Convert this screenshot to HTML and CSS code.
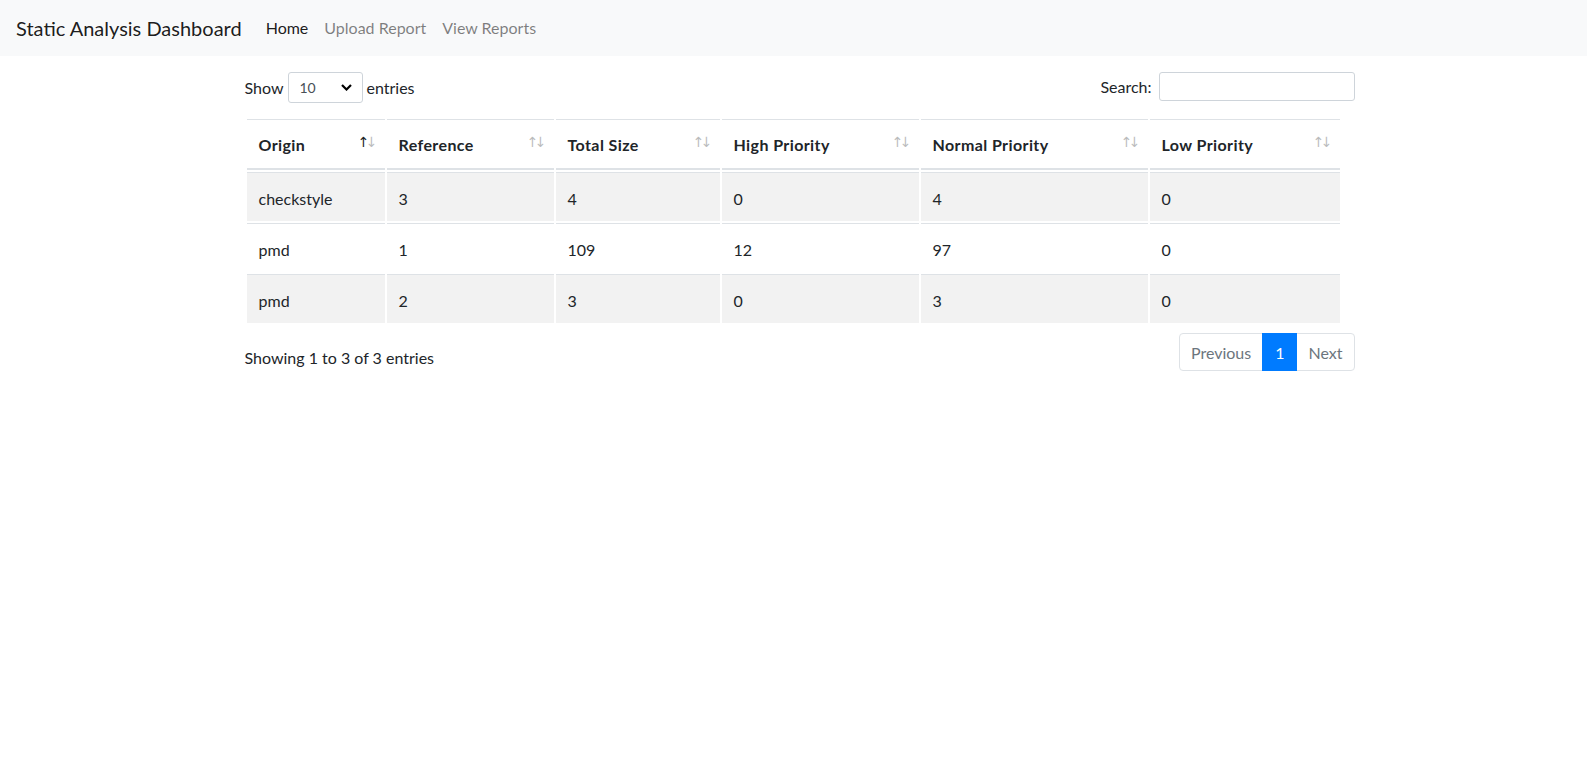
FILE: index.html
```html
<!DOCTYPE html>
<html lang="en">
<head>
<meta charset="utf-8">
<title>Static Analysis Dashboard</title>
<link rel="stylesheet" href="styles.css">
</head>
<body>
<nav class="navbar">
  <a class="brand" href="#">Static Analysis Dashboard</a>
  <ul class="nav">
    <li><a class="nav-link active" href="#">Home</a></li>
    <li><a class="nav-link" href="#">Upload Report</a></li>
    <li><a class="nav-link" href="#">View Reports</a></li>
  </ul>
</nav>
<main class="container">
  <div class="dt-top">
    <label class="dt-length">Show
      <span class="select-wrap">
        <select class="dt-select"><option>10</option><option>25</option><option>50</option><option>100</option></select>
        <svg class="chev" width="11" height="7" viewBox="0 0 11 7"><path d="M1 1l4.5 4.5L10 1" fill="none" stroke="#000" stroke-width="2.2"/></svg>
      </span>
      entries</label>
    <label class="dt-filter">Search: <input class="dt-search" type="search"></label>
  </div>
  <table class="dt">
    <thead>
      <tr>
        <th class="c1 sort-asc">Origin</th>
        <th class="c2">Reference</th>
        <th class="c3">Total Size</th>
        <th class="c4">High Priority</th>
        <th class="c5">Normal Priority</th>
        <th class="c6">Low Priority</th>
      </tr>
    </thead>
    <tbody>
      <tr class="odd"><td>checkstyle</td><td>3</td><td>4</td><td>0</td><td>4</td><td>0</td></tr>
      <tr><td>pmd</td><td>1</td><td>109</td><td>12</td><td>97</td><td>0</td></tr>
      <tr class="odd"><td>pmd</td><td>2</td><td>3</td><td>0</td><td>3</td><td>0</td></tr>
    </tbody>
  </table>
  <div class="dt-bottom">
    <div class="dt-info">Showing 1 to 3 of 3 entries</div>
    <ul class="pagination">
      <li class="page-item disabled first"><a class="page-link" href="#">Previous</a></li>
      <li class="page-item active"><a class="page-link" href="#">1</a></li>
      <li class="page-item disabled last"><a class="page-link" href="#">Next</a></li>
    </ul>
  </div>
</main>
</body>
</html>
```
FILE: styles.css
```css
* { box-sizing: border-box; }
html, body { margin: 0; padding: 0; }
body {
  font-family: Lato, "Liberation Sans", sans-serif;
  font-size: 16px;
  line-height: 24px;
  color: #212529;
  background: #fff;
}
a { text-decoration: none; }

.navbar {
  display: flex;
  align-items: center;
  height: 56px;
  padding: 8px 16px;
  background: #f8f9fa;
}
.brand {
  font-size: 20px;
  line-height: 30px;
  padding: 5px 0;
  margin-right: 16px;
  color: rgba(0,0,0,.9);
}
.nav { display: flex; list-style: none; margin: 0; padding: 0; }
.nav-link { display: block; padding: 8px; color: rgba(0,0,0,.5); }
.nav-link.active { color: rgba(0,0,0,.9); }

.container {
  max-width: 1140px;
  margin: 0 auto;
  padding: 16px 9px 0 21px;
}
.dt-top {
  display: flex;
  justify-content: space-between;
  align-items: flex-start;
}
.dt-length, .dt-filter {
  display: flex;
  align-items: center;
  white-space: nowrap;
}
.dt-length { gap: 4px; height: 31px; }
.dt-filter { gap: 7px; height: 29px; }
.select-wrap { position: relative; display: inline-block; }
.dt-select {
  appearance: none;
  -webkit-appearance: none;
  display: block;
  width: 75px;
  height: 31px;
  padding: 4px 28px 4px 11px;
  font-family: inherit;
  font-size: 14px;
  line-height: 21px;
  color: #495057;
  background: #fff;
  border: 1px solid #ced4da;
  border-radius: 3px;
}
.chev { position: absolute; right: 11px; top: 12px; pointer-events: none; }
.dt-search {
  width: 196px;
  height: 29px;
  padding: 4px 8px;
  font-family: inherit;
  font-size: 14px;
  border: 1px solid #ced4da;
  border-radius: 3px;
  background: #fff;
}

.dt {
  margin-top: 14px;
  width: 1097px;
  table-layout: fixed;
  border-collapse: separate;
  border-spacing: 2px;
}
.dt th, .dt td {
  padding: 14px 12px 10px;
  text-align: left;
  vertical-align: top;
  border-top: 1px solid #dee2e6;
}
.dt th {
  position: relative;
  font-weight: 700;
  letter-spacing: .4px;
  padding: 13px 30px 11px 12px;
  border-bottom: 2px solid #dee2e6;
  white-space: nowrap;
}
.dt th::before, .dt th::after {
  position: absolute;
  bottom: 14px;
  font-weight: 400;
  letter-spacing: 0;
  opacity: .3;
  font-family: "DejaVu Sans", sans-serif;
  font-size: 14px;
  line-height: 24px;
}
.dt th::before { content: "\2191"; right: 15px; }
.dt th::after { content: "\2193"; right: 7px; }
.dt th.sort-asc::before { opacity: 1; }
.dt tr.odd td { background: rgba(0,0,0,.05); }
.c1 { width: 138px; }
.c2 { width: 167px; }
.c3 { width: 164px; }
.c4 { width: 197px; }
.c5 { width: 227px; }
.c6 { width: 190px; }

.dt-bottom {
  display: flex;
  justify-content: space-between;
  align-items: flex-start;
  margin-top: 6px;
}
.dt-info { padding-top: 15px; }
.pagination {
  display: flex;
  list-style: none;
  margin: 2px 0;
  padding: 0;
}
.page-link {
  display: block;
  padding: 9px 12px 7px;
  line-height: 20px;
  border: 1px solid #dee2e6;
  margin-left: -1px;
  background: #fff;
  color: #007bff;
}
.disabled .page-link { color: #6c757d; padding-left: 11px; padding-right: 11px; }
.active .page-link { background: #007bff; border-color: #007bff; color: #fff; position: relative; }
.first .page-link { margin-left: 0; border-radius: 4px 0 0 4px; }
.last .page-link { border-radius: 0 4px 4px 0; }
```
